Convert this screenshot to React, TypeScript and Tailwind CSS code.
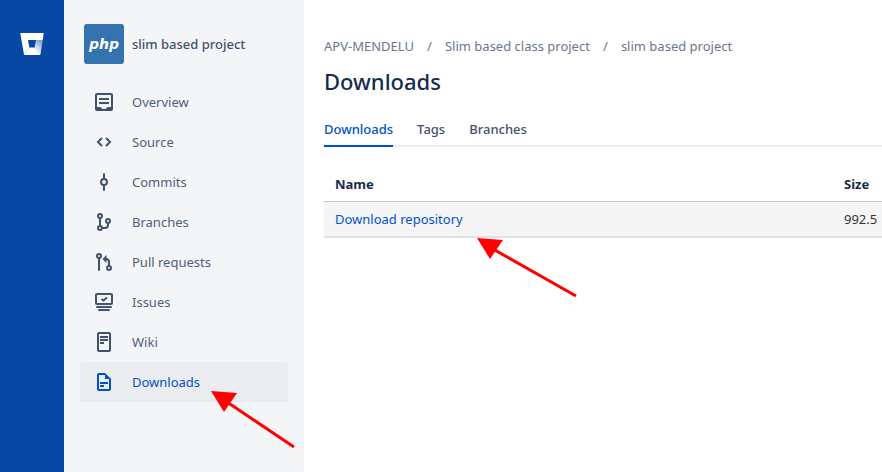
import type { ReactNode } from "react";

function Icon({ children }: { children: ReactNode }) {
  return (
    <svg viewBox="0 0 24 24" width="24" height="24" fill="none" stroke="currentColor" strokeWidth="2" className="shrink-0" aria-hidden="true">
      {children}
    </svg>
  );
}

const items: { label: string; icon: ReactNode; active?: boolean }[] = [
  {
    label: "Overview",
    icon: (
      <Icon>
        <rect x="4" y="4" width="16" height="16" rx="1" />
        <path d="M7 9h10M7 13h10" />
        <path d="M4 17h5c0 1 1 2 3 2s3-1 3-2h5v4H4z" fill="currentColor" stroke="none" />
      </Icon>
    ),
  },
  {
    label: "Source",
    icon: (
      <Icon>
        <path d="M10 8l-4 4 4 4M14 8l4 4-4 4" />
      </Icon>
    ),
  },
  {
    label: "Commits",
    icon: (
      <Icon>
        <circle cx="12" cy="12" r="3" />
        <path d="M12 4v5M12 15v5" strokeLinecap="round" />
      </Icon>
    ),
  },
  {
    label: "Branches",
    icon: (
      <Icon>
        <circle cx="8" cy="6" r="2" />
        <circle cx="8" cy="18" r="2" />
        <circle cx="16" cy="11" r="2" />
        <path d="M8 8v8M16 13v2a3 3 0 0 1-3 3h-3" />
      </Icon>
    ),
  },
  {
    label: "Pull requests",
    icon: (
      <Icon>
        <circle cx="7" cy="6" r="2" />
        <circle cx="17" cy="18" r="2" />
        <path d="M7 8v12" strokeLinecap="round" />
        <path d="M17 16v-4a3 3 0 0 0-3-3h-1" />
        <path d="M14.500 5v8L10.500 9z" fill="currentColor" stroke="none" />
      </Icon>
    ),
  },
  {
    label: "Issues",
    icon: (
      <Icon>
        <rect x="4" y="4" width="16" height="10" rx="1" />
        <path d="M9.500 9l2 1.500L15 7.500" />
        <path d="M5 17h14M7 20h10" strokeLinecap="round" />
      </Icon>
    ),
  },
  {
    label: "Wiki",
    icon: (
      <Icon>
        <rect x="6" y="3" width="12" height="18" rx="1" />
        <path d="M8 7h8M8 10h8M8 13h4" />
      </Icon>
    ),
  },
  {
    label: "Downloads",
    active: true,
    icon: (
      <Icon>
        <path d="M13 4H7a1 1 0 0 0-1 1v14a1 1 0 0 0 1 1h10a1 1 0 0 0 1-1V9" />
        <path d="M13 3l6 6h-6z" fill="currentColor" stroke="none" />
        <path d="M8 13h8M8 16h4" />
      </Icon>
    ),
  },
];

function BitbucketLogo() {
  return (
    <svg viewBox="0 0 24 24" width="24" height="24" role="img" aria-label="Bitbucket">
      <defs>
        <linearGradient id="bucket" x1="21" y1="8" x2="13" y2="18" gradientUnits="userSpaceOnUse">
          <stop offset="0.1" stopColor="#fff" stopOpacity="0.5" />
          <stop offset="1" stopColor="#fff" />
        </linearGradient>
      </defs>
      <path d="M.8 1h22.400c.4 0 .6.300.5.600L22.700 8H8l1.300 7.500L4 22.600.300 1.600C.200 1.300.4 1 .8 1z" fill="#fff" />
      <path d="M22.700 8H16l-1.300 7.500H9.200L3.900 22.500c.1.300.4.500.7.500h15.100c.4 0 .7-.3.800-.7z" fill="url(#bucket)" />
    </svg>
  );
}

function Arrow({ dx, dy, className }: { dx: number; dy: number; className: string }) {
  return (
    <svg width={dx + 3} height={dy + 3} className={className} aria-hidden="true">
      <path d={`M16 11L${dx} ${dy}`} stroke="#f00" strokeWidth="3" />
      <path d="M0 0l26 2-13 19z" fill="#f00" />
    </svg>
  );
}

export default function App() {
  return (
    <div className="flex min-h-screen overflow-hidden bg-white font-['Noto_Sans','Open_Sans',sans-serif] text-[13px] leading-5 text-[#42526e]">
      <aside className="flex w-16 shrink-0 justify-center bg-[#0747a6] pt-8">
        <a href="#home" className="h-6">
          <BitbucketLogo />
        </a>
      </aside>

      <nav className="relative w-60 shrink-0 bg-[#f4f5f7] px-4 pt-6" aria-label="Repository">
        <a href="#project" className="mb-[18px] flex items-center gap-2 pl-1 font-medium">
          <span className="flex size-10 items-center justify-center rounded-[3px] bg-[#3572b0] font-['DejaVu_Sans',sans-serif] text-sm leading-5 font-bold italic text-white">php</span>
          slim based project
        </a>
        <ul>
          {items.map(({ label, icon, active }) => (
            <li key={label}>
              <a
                href={"#" + label}
                aria-current={active ? "page" : undefined}
                className={"flex h-10 items-center gap-4 rounded-[3px] pl-3 " + (active ? "bg-[#ebecf0] text-[#0052cc]" : "text-[#505f79]")}
              >
                <span className={active ? "" : "text-[#42526e]"}>{icon}</span>
                {label}
              </a>
            </li>
          ))}
        </ul>
        <Arrow dx={83} dy={56} className="absolute top-[391px] left-[147px]" />
      </nav>

      <main className="relative min-w-0 flex-1 pt-9 pl-5">
        <nav aria-label="Breadcrumb">
          <ol className="flex h-5 items-center whitespace-nowrap text-[#6b778c]">
            <li><a href="#team">APV-MENDELU</a></li>
            <li className="w-[31px] text-center" aria-hidden="true">/</li>
            <li><a href="#class">Slim based class project</a></li>
            <li className="w-[31px] text-center" aria-hidden="true">/</li>
            <li><a href="#project">slim based project</a></li>
          </ol>
        </nav>
        <h1 className="mt-3 text-[22px] leading-[26px] font-medium text-[#172b4d]">Downloads</h1>
        <div className="mt-[21px] flex h-8 gap-6 border-b-2 border-[#ebecf0] leading-7 font-medium">
          <a href="#downloads" className="h-8 border-b-2 border-[#0052cc] text-[#0052cc]">Downloads</a>
          <a href="#tags">Tags</a>
          <a href="#branches">Branches</a>
        </div>
        <table className="mt-5 w-full text-left">
          <thead className="border-b border-[#c1c7d0] text-[#172b4d]">
            <tr className="h-[34px]">
              <th className="pl-[11px] font-bold">Name</th>
              <th className="w-[38px] font-bold">Size</th>
            </tr>
          </thead>
          <tbody>
            <tr className="h-9 border-b-2 border-[#dfe1e6] bg-[#f5f5f5]">
              <td className="pl-[11px]"><a href="#zip" className="text-[#0052cc]">Download repository</a></td>
              <td className="text-[#333]">992.5</td>
            </tr>
          </tbody>
        </table>
        <Arrow dx={99} dy={58} className="absolute top-[238px] left-[173px]" />
      </main>
    </div>
  );
}
